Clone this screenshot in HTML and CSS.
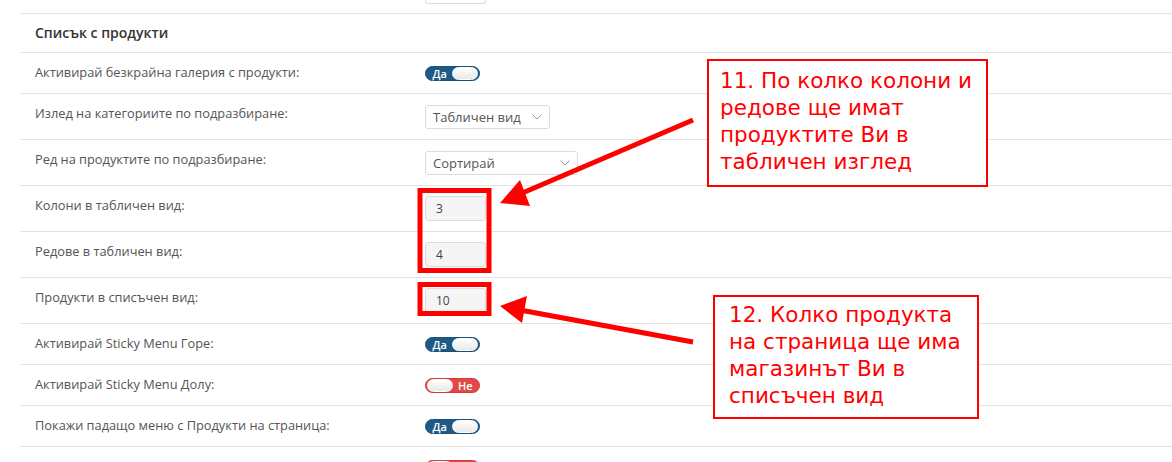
FILE: index.html
```html
<!DOCTYPE html>
<html lang="bg">
<head>
<meta charset="utf-8">
<title>Списък с продукти</title>
<link rel="stylesheet" href="styles.css">
</head>
<body>
<div class="page">
  <div class="row top-row">
    <div class="label"></div>
    <div class="control"><span class="input partial"></span></div>
  </div>
  <div class="section-title">Списък с продукти</div>

  <div class="row toggle-row">
    <div class="label">Активирай безкрайна галерия с продукти:</div>
    <div class="control"><span class="toggle on"><span class="t-text">Да</span><span class="knob"></span></span></div>
  </div>
  <div class="row field-row">
    <div class="label">Излед на категориите по подразбиране:</div>
    <div class="control"><span class="select w1"><span class="s-text">Табличен вид</span><svg class="chev" width="10" height="6" viewBox="0 0 10 6"><path d="M0.5 0.5 L5 5 L9.5 0.5" fill="none" stroke="#9a9a9a" stroke-width="1"/></svg></span></div>
  </div>
  <div class="row field-row">
    <div class="label">Ред на продуктите по подразбиране:</div>
    <div class="control"><span class="select w2"><span class="s-text">Сортирай</span><svg class="chev" width="10" height="6" viewBox="0 0 10 6"><path d="M0.5 0.5 L5 5 L9.5 0.5" fill="none" stroke="#9a9a9a" stroke-width="1"/></svg></span></div>
  </div>
  <div class="row field-row">
    <div class="label">Колони в табличен вид:</div>
    <div class="control"><span class="input">3</span></div>
  </div>
  <div class="row field-row">
    <div class="label">Редове в табличен вид:</div>
    <div class="control"><span class="input">4</span></div>
  </div>
  <div class="row field-row">
    <div class="label">Продукти в списъчен вид:</div>
    <div class="control"><span class="input">10</span></div>
  </div>
  <div class="row toggle-row">
    <div class="label">Активирай Sticky Menu Горе:</div>
    <div class="control"><span class="toggle on"><span class="t-text">Да</span><span class="knob"></span></span></div>
  </div>
  <div class="row toggle-row">
    <div class="label">Активирай Sticky Menu Долу:</div>
    <div class="control"><span class="toggle off"><span class="knob"></span><span class="t-text">Не</span></span></div>
  </div>
  <div class="row toggle-row">
    <div class="label">Покажи падащо меню с Продукти на страница:</div>
    <div class="control"><span class="toggle on"><span class="t-text">Да</span><span class="knob"></span></span></div>
  </div>
  <div class="row toggle-row last">
    <div class="label"></div>
    <div class="control"><span class="toggle off"><span class="knob"></span><span class="t-text">Не</span></span></div>
  </div>
</div>

<svg class="overlay" width="1172" height="462" viewBox="0 0 1172 462">
  <rect x="420" y="190.5" width="69" height="80" fill="none" stroke="#ff0000" stroke-width="5"/>
  <rect x="420" y="284.5" width="69" height="29" fill="none" stroke="#ff0000" stroke-width="5"/>
  <line x1="693" y1="120" x2="520" y2="194" stroke="#ff0000" stroke-width="5"/>
  <polygon points="500,203 520,180 530,206" fill="#ff0000"/>
  <line x1="693" y1="342" x2="520" y2="310" stroke="#ff0000" stroke-width="5"/>
  <polygon points="500,306 527,296 522,323" fill="#ff0000"/>
</svg>

<div class="note note1">11. По колко колони и<br>редове ще имат<br>продуктите Ви в<br>табличен изглед</div>
<div class="note note2">12. Колко продукта<br>на страница ще има<br>магазинът Ви в<br>списъчен вид</div>
</body>
</html>
```
FILE: styles.css
```css
html, body {
  margin: 0;
  padding: 0;
  background: #ffffff;
}
body {
  width: 1172px;
  height: 462px;
  overflow: hidden;
  position: relative;
  font-family: "Open Sans", "Liberation Sans", sans-serif;
}
.page {
  padding-left: 20px;
}
.row {
  display: grid;
  grid-template-columns: 390px 1fr;
  align-items: center;
  padding-left: 15px;
  border-bottom: 1px solid #e3e3e3;
}
.top-row {
  height: 13px;
  align-items: start;
}
.section-title {
  height: 38px;
  line-height: 38px;
  padding-left: 15px;
  font-size: 14px;
  font-weight: 600;
  color: #333;
  border-bottom: 1px solid #e3e3e3;
}
.toggle-row { height: 40px; }
.field-row { height: 45px; }
.label {
  align-self: start;
  padding-top: 10px;
  font-size: 12.8px;
  line-height: 19px;
  color: #555;
}
.top-row .label { padding-top: 0; }
.control {
  display: flex;
  align-items: center;
}
.toggle {
  display: inline-flex;
  align-items: center;
  width: 55px;
  height: 15px;
  box-sizing: border-box;
  border-radius: 8px;
  padding: 1px;
}
.toggle.on {
  background: #1f5a87;
  border: 1px solid #1b4f77;
}
.toggle.off {
  background: #e24848;
  border: 1px solid #cf3b3b;
}
.t-text {
  color: #fff;
  font-size: 11px;
  font-weight: 600;
  line-height: 13px;
  width: 26px;
  text-align: center;
}
.knob {
  width: 26px;
  height: 13px;
  box-sizing: border-box;
  border-radius: 7px;
  background: linear-gradient(#ffffff, #e9e9e9);
  border: 1px solid #ffffff;
}
.toggle.on .knob { margin-left: auto; }
.toggle.off .t-text { margin-left: auto; }
.select {
  display: inline-flex;
  align-items: center;
  justify-content: space-between;
  height: 24px;
  box-sizing: border-box;
  border: 1px solid #dcdcdc;
  border-radius: 3px;
  padding: 0 7px 0 7px;
  font-size: 13px;
  color: #555;
  background: #fff;
}
.select.w1 { width: 125px; }
.select.w2 { width: 153px; }
.chev { margin-top: 1px; }
.input {
  display: inline-flex;
  align-items: center;
  width: 61px;
  height: 25px;
  box-sizing: border-box;
  border: 1px solid #dcdcdc;
  border-radius: 3px;
  background: #f5f5f5;
  padding-left: 10px;
  font-size: 12px;
  color: #444;
}
.input.partial {
  height: 4px;
  border-top: none;
  border-radius: 0 0 3px 3px;
  background: #fff;
}
.overlay {
  position: absolute;
  left: 0;
  top: 0;
  pointer-events: none;
}
.note {
  position: absolute;
  box-sizing: border-box;
  border: 2px solid #ff0000;
  background: #fff;
  color: #ff0000;
  font-family: "DejaVu Sans", sans-serif;
  font-size: 21.5px;
  line-height: 27px;
  white-space: nowrap;
}
.note1 {
  left: 707px;
  top: 59px;
  width: 281px;
  height: 128px;
  padding: 6px 0 0 11px;
}
.note2 {
  left: 713px;
  top: 295px;
  width: 266px;
  height: 124px;
  padding: 4px 0 0 14px;
}
```
